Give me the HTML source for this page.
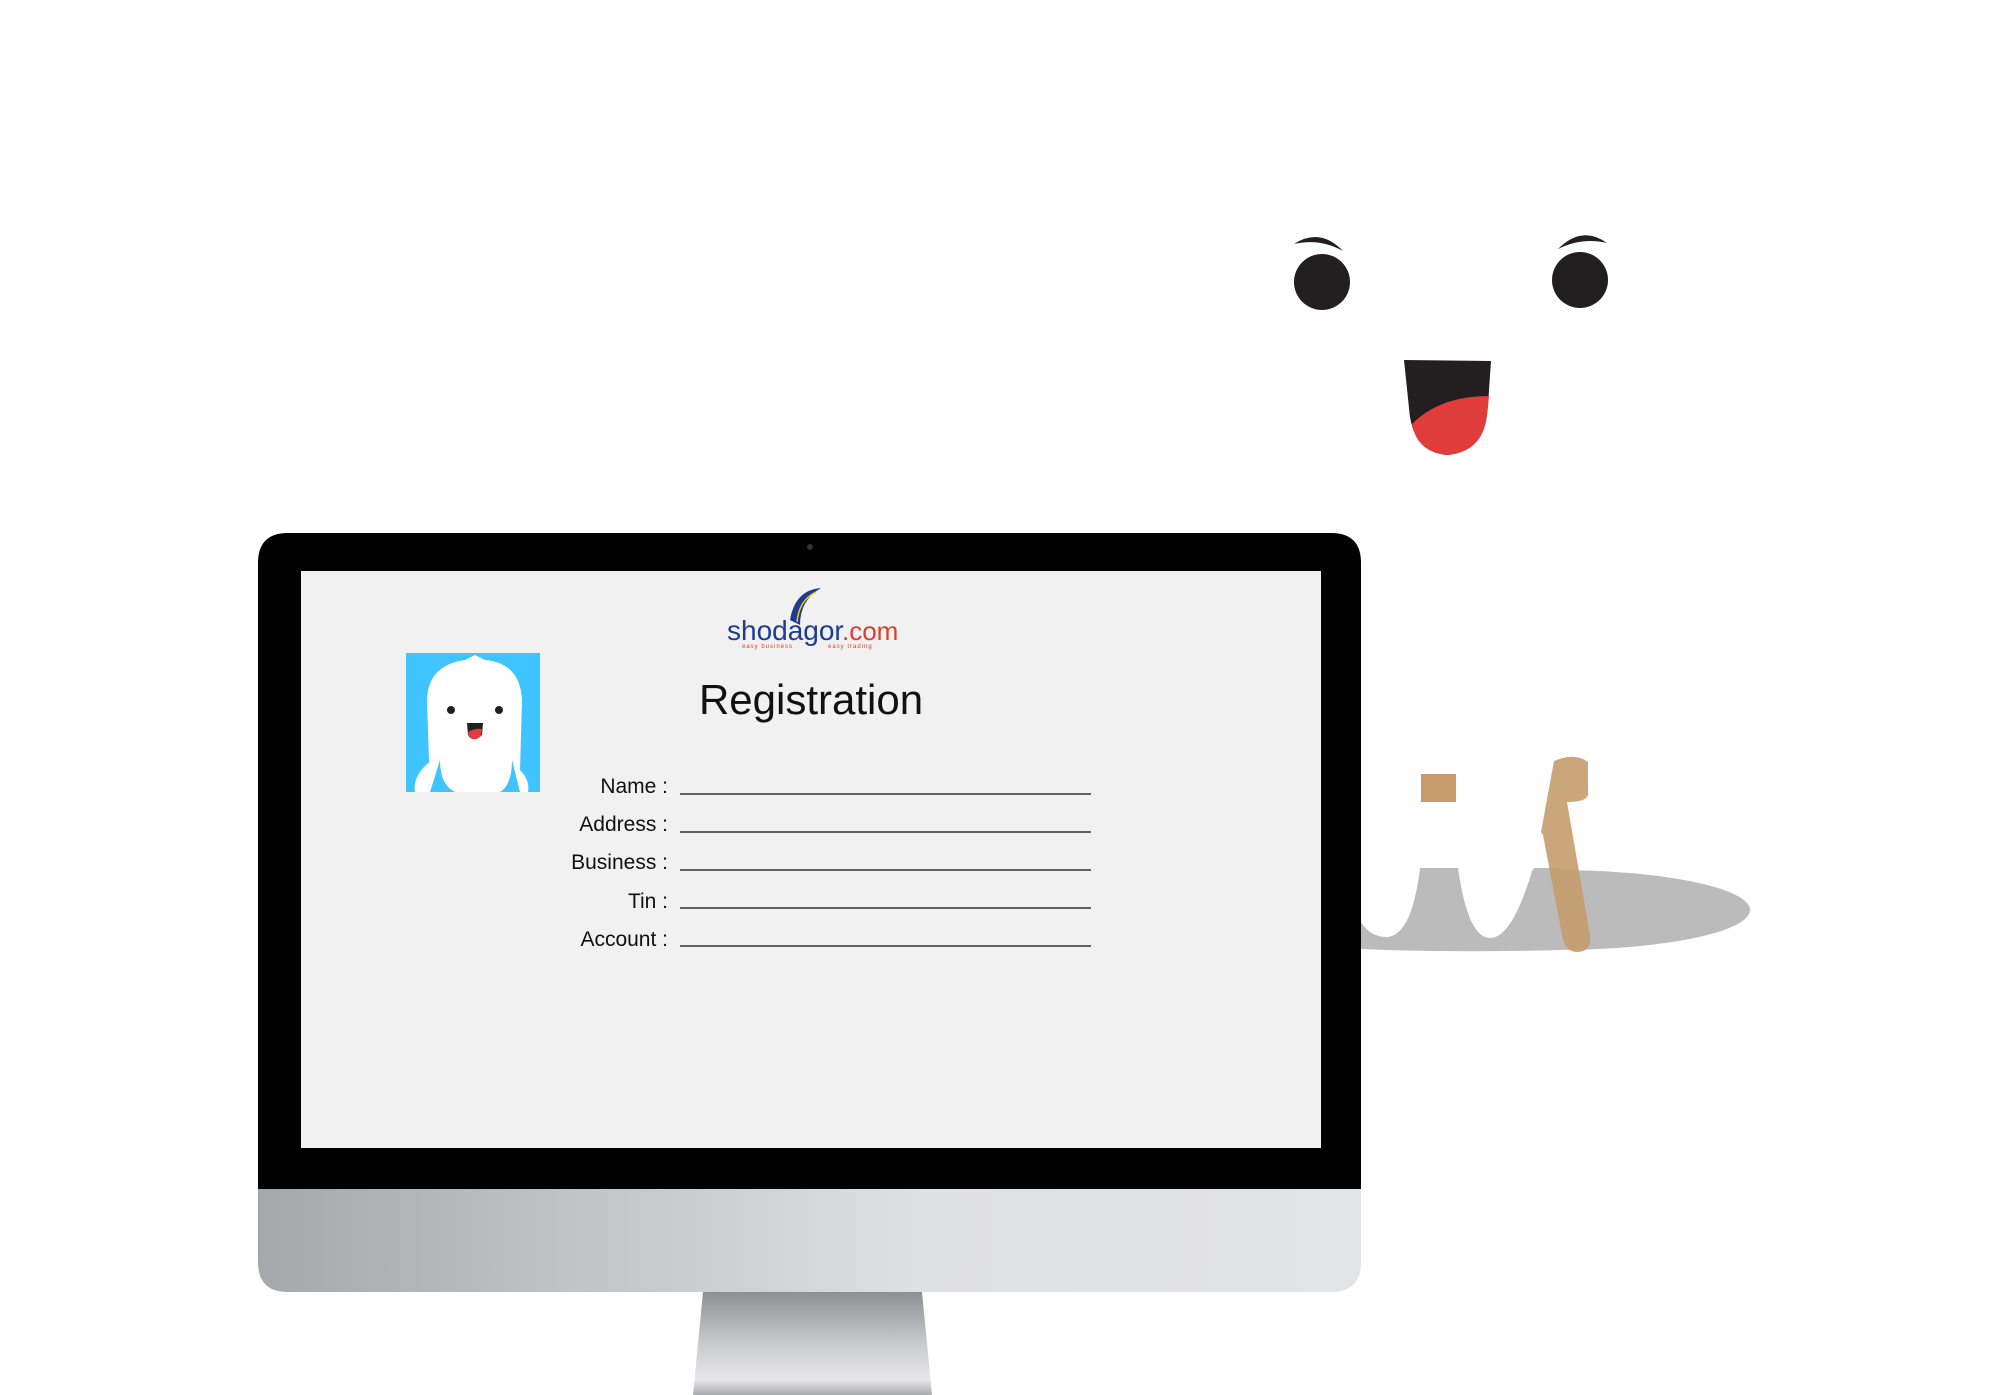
<!DOCTYPE html>
<html><head><meta charset="utf-8"><style>
html,body{margin:0;padding:0;background:#fff;width:2000px;height:1395px;overflow:hidden}
svg{display:block}
text{font-family:"Liberation Sans",sans-serif}
</style></head><body>
<svg width="2000" height="1395" viewBox="0 0 2000 1395" xmlns="http://www.w3.org/2000/svg">
<defs>
<linearGradient id="chin" x1="0" x2="1" y1="0" y2="0">
<stop offset="0" stop-color="#a6a7ab"/><stop offset="0.35" stop-color="#c8c9cc"/><stop offset="0.6" stop-color="#dfe0e2"/><stop offset="1" stop-color="#e3e4e6"/>
</linearGradient>
<linearGradient id="stand" x1="0" x2="0" y1="0" y2="1">
<stop offset="0" stop-color="#8e8f93"/><stop offset="0.5" stop-color="#c9cacd"/><stop offset="0.85" stop-color="#e8e8ea"/><stop offset="1" stop-color="#a9aaad"/>
</linearGradient>
</defs>
<!-- shadow -->
<ellipse cx="1555" cy="910" rx="195" ry="40" fill="#bbbbbb"/>
<path d="M1361 868 L1560 868 L1560 950 Q1450 953 1361 949 Z" fill="#bbbbbb"/>
<path d="M1361 860 L1420 860 L1420 868 Q1412 935 1387 937 Q1370 937 1361 922 Z" fill="#fff"/>
<path d="M1458 860 L1540 860 L1532 871 Q1512 938 1490 938 Q1468 938 1458 868 Z" fill="#fff"/>
<rect x="1421" y="774" width="35" height="28" fill="#c69c6d"/>
<path d="M1554 761 Q1575 752 1588 762 L1588 795 Q1586 802 1567 802 L1590 935 Q1592 952 1577 952 Q1565 952 1562 935 L1543 835 L1541 832 Z" fill="#c69c6d" opacity="0.9"/>
<!-- face -->
<circle cx="1322" cy="282" r="28" fill="#231f20"/>
<path d="M1294 244 Q1320 227 1343 251 Q1320 238 1294 244Z" fill="#231f20"/>
<circle cx="1580" cy="280" r="28" fill="#231f20"/>
<path d="M1558 249 Q1582 225 1607 243 Q1582 237 1558 249Z" fill="#231f20"/>
<path d="M1404 360 L1491 361 L1488 405 Q1485 452 1447 455 Q1412 452 1409 408Z" fill="#231f20"/>
<path d="M1412 424 Q1440 396 1489 396 L1487 415 Q1483 452 1447 455 Q1417 452 1412 424Z" fill="#e03c3c"/>
<!-- stand -->
<path d="M703 1292 L922 1292 L932 1395 L693 1395Z" fill="url(#stand)"/>
<!-- monitor -->
<path d="M258 1189 L1361 1189 L1361 1262 Q1361 1292 1331 1292 L288 1292 Q258 1292 258 1262Z" fill="url(#chin)"/>
<path d="M288 533 L1331 533 Q1361 533 1361 563 L1361 1189 L258 1189 L258 563 Q258 533 288 533Z" fill="#000"/>
<circle cx="810" cy="547" r="3" fill="#333"/>
<rect x="301" y="571" width="1020" height="577" fill="#f1f1f1"/>
<!-- photo -->
<rect x="406" y="653" width="134" height="139" fill="#40c4ff"/>
<path d="M430 792 L427 700 Q428 665 465 660 L475 655 L485 660 Q520 663 522 700 L520 770 Q530 780 528 792Z" fill="#fff"/>
<path d="M415 792 Q412 775 432 760 L445 792Z" fill="#fff"/>
<path d="M440 760 Q440 785 455 792 L430 792Z" fill="#40c4ff"/>
<path d="M512 760 Q512 785 500 792 L520 792Z" fill="#40c4ff"/>
<circle cx="451" cy="710" r="4" fill="#231f20"/><circle cx="499" cy="710" r="4" fill="#231f20"/>
<path d="M467 723 L483 723 L482 735 Q475 742 468 735Z" fill="#231f20"/>
<path d="M468 732 Q475 728 482 729 L481 736 Q475 742 469 737Z" fill="#e03c3c"/>
<!-- logo -->
<path d="M790 620 Q795 590 821 588 Q800 600 800 625Z" fill="#1f3a93"/>
<path d="M797 622 Q799 600 816 592" stroke="#f5d000" stroke-width="1.5" fill="none"/>
<text x="727" y="640" font-size="28" fill="#1f3a93" font-family="Liberation Sans">shodagor</text>
<text x="842" y="640" font-size="26" fill="#e03c2c">.com</text>
<text x="742" y="648" font-size="6" fill="#e03c2c" letter-spacing="1">easy business</text>
<text x="828" y="648" font-size="6" fill="#e03c2c" letter-spacing="1">easy trading</text>
<text x="811" y="714" font-size="42" fill="#111" text-anchor="middle">Registration</text>
<g font-size="21" fill="#111" text-anchor="end">
<text x="668" y="793">Name :</text>
<text x="668" y="831">Address :</text>
<text x="668" y="869">Business :</text>
<text x="668" y="908">Tin :</text>
<text x="668" y="946">Account :</text>
</g>
<g stroke="#333" stroke-width="1.5">
<line x1="680" y1="794" x2="1091" y2="794"/>
<line x1="680" y1="832" x2="1091" y2="832"/>
<line x1="680" y1="870" x2="1091" y2="870"/>
<line x1="680" y1="908" x2="1091" y2="908"/>
<line x1="680" y1="946" x2="1091" y2="946"/>
</g>
</svg>
</body></html>
